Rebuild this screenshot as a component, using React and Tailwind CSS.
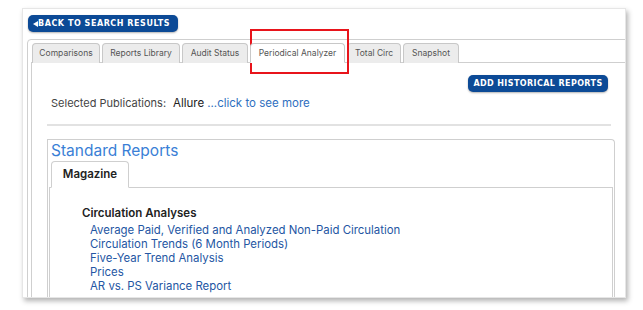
import React from "react";

const tabs = [
  { name: "Comparisons", w: "w-[68px]" },
  { name: "Reports Library", w: "w-[78px]" },
  { name: "Audit Status", w: "w-[66px]" },
  { name: "Periodical Analyzer", w: "w-[95px]", active: true },
  { name: "Total Circ", w: "w-[54px]" },
  { name: "Snapshot", w: "w-[56px]" },
];

const links = [
  "Average Paid, Verified and Analyzed Non-Paid Circulation",
  "Circulation Trends (6 Month Periods)",
  "Five-Year Trend Analysis",
  "Prices",
  "AR vs. PS Variance Report",
];

const Tab = ({ name, w, active }) => (
  <div
    className={`${w} h-[20px] flex items-center justify-center rounded-t-[4px] border border-[#c8c8c8] text-[8.5px] text-[#555] ${
      active ? "bg-white border-b-white relative z-10" : "bg-[#ececec] border-b-0"
    }`}
  >
    {name}
  </div>
);

export default function App() {
  return (
    <div className="relative w-[643px] h-[310px] bg-white overflow-hidden font-['Inter',sans-serif]">
      <div className="ml-[22px] mt-[8px] w-[604px] h-[290px] bg-white border border-[#e6e6e6] shadow-[2px_3px_5px_rgba(0,0,0,0.3)] overflow-hidden pl-[4px] pt-[6px]">
        <button className="ml-[1px] h-[17px] w-[150px] rounded-[5px] bg-[#0c4a96] text-white flex items-center pl-[5px] shadow-[0_1px_2px_rgba(0,0,0,0.3)] font-['DejaVu_Sans',sans-serif] font-bold text-[8px] tracking-[0.55px]">
          <span className="inline-block w-0 h-0 border-y-[3px] border-y-transparent border-r-[5px] border-r-white" />
          BACK TO SEARCH RESULTS
        </button>

        <div className="mt-[7px] w-[599px] h-[260px] border border-[#cfcfcf] rounded-tl-[4px] pt-[3px] pl-[3px]">
          <div className="flex items-end gap-[2px] pl-[1px]">
            {tabs.map((t) => (
              <Tab key={t.name} {...t} />
            ))}
          </div>

          <div className="-mt-[1px] h-[240px] border border-[#cfcfcf] border-r-0 bg-white pt-[12px] pl-[15px]">
            <div className="flex justify-end pr-[17px]">
              <button className="h-[17px] w-[140px] rounded-[5px] bg-[#0c4a96] text-white flex items-center justify-center shadow-[0_1px_2px_rgba(0,0,0,0.3)] font-['DejaVu_Sans',sans-serif] font-bold text-[8px] tracking-[0.4px]">
                ADD HISTORICAL REPORTS
              </button>
            </div>

            <div className="mt-[3px] ml-[4px] flex items-baseline h-[16px]">
              <span className="text-[11px] text-[#444]">Selected Publications:</span>
              <span className="ml-[7px] text-[11.5px] text-[#222]">Allure</span>
              <span className="ml-[3px] text-[11.5px] text-[#2f6fc0]">...click to see more</span>
            </div>

            <div className="mt-[13px] mr-[14px] h-0 border-t-2 border-[#e2e2e2]" />

            <div className="mt-[13px] mr-[10px] h-[172px] border border-[#cfcfcf] border-b-0 rounded-tr-[4px] pt-[1px]">
              <div className="pl-[3px] text-[15.5px] leading-[19px] text-[#3a7fd6]">Standard Reports</div>
              <div className="pl-[3px] mt-[1px]">
                <div className="w-[78px] h-[27px] flex items-center justify-center rounded-t-[4px] border border-[#cfcfcf] border-b-white bg-white relative z-10 text-[11.5px] font-semibold text-[#222]">
                  Magazine
                </div>
              </div>
              <div className="-mt-[1px] ml-[1px] mr-[1px] h-[130px] border border-[#cfcfcf] border-b-0 pl-[32px] pt-[17px]">
                <div className="text-[11.5px] font-semibold text-[#222] leading-[16px]">Circulation Analyses</div>
                <div className="ml-[8px] mt-[2px]">
                  {links.map((l) => (
                    <div key={l} className="text-[11.4px] leading-[14px] text-[#2456a3]">
                      {l}
                    </div>
                  ))}
                </div>
              </div>
            </div>
          </div>
        </div>
      </div>
      <div className="absolute left-[250px] top-[29px] w-[99px] h-[45px] border-2 border-[#e8141b]" />
    </div>
  );
}
